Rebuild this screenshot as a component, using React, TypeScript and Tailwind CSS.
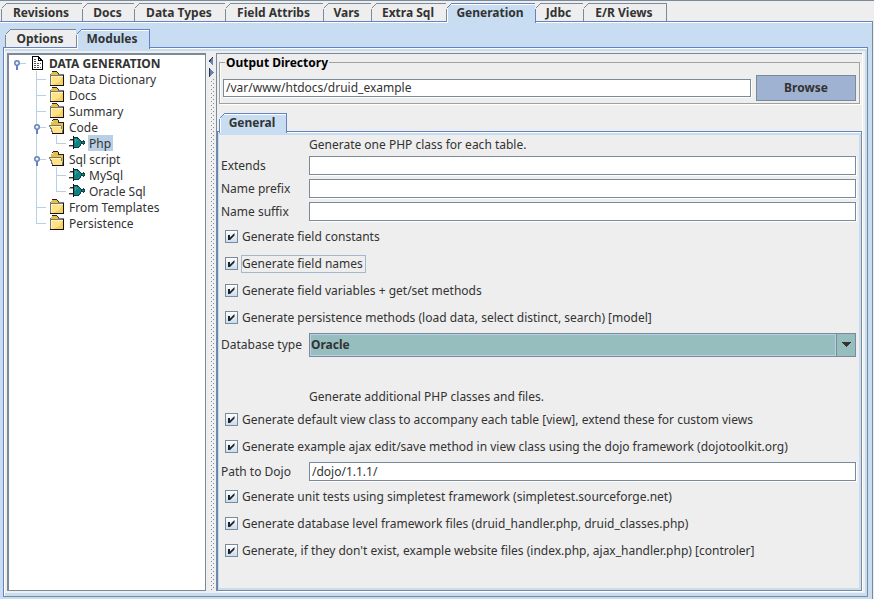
import React from "react";
import clsx from "clsx";

type TabProps = { label: string; width: string; selected?: boolean; first?: boolean; ground?: string };

function Tab({ label, width, selected, first, ground = "#eeeeee" }: TabProps) {
  const edge = selected ? "#6382bf" : "#7a8a99";
  return (
    <button
      role="tab"
      aria-selected={!!selected}
      className={clsx(
        "relative flex shrink-0 justify-center border-t border-r pr-0.5 text-center leading-[18px] font-bold",
        width,
        selected
          ? "-mb-0.5 h-5 border-[#6382bf] bg-[#c8ddf2] shadow-[inset_0_1px_0_#ffffff,inset_1px_0_0_#ffffff]"
          : "h-[18px] border-[#7a8a99] bg-[#eeeeee]",
        first && "border-l",
      )}
    >
      {label}
      <svg className="absolute -top-px -left-px" width="7" height="7" viewBox="0 0 7 7" shapeRendering="crispEdges" aria-hidden="true">
        <path d="M0 0H6L0 6Z" fill={ground} />
        <path d="M0.5 5.5L5.5 0.5" stroke={edge} />
      </svg>
    </button>
  );
}

type Guide = "handle" | "root" | "tee" | "elbow" | "pass" | "blank";

function GuideCell({ kind }: { kind: Guide }) {
  return (
    <svg className="shrink-0" width="20" height="16" viewBox="0 0 20 16" shapeRendering="crispEdges" aria-hidden="true">
      {(kind === "tee" || kind === "pass" || kind === "handle") && <path d="M7.5 0V16" stroke="#b8cfe5" />}
      {kind === "elbow" && <path d="M7.5 0V8" stroke="#b8cfe5" />}
      {(kind === "tee" || kind === "elbow") && <path d="M7 8.5H17" stroke="#b8cfe5" />}
      {(kind === "handle" || kind === "root") && (
        <g>
          <path d="M11 8.5H17" stroke="#b8cfe5" />
          <path d="M7 10h2v5h-2z" fill="#6382bf" />
          <circle cx="8" cy="8" r="2.25" fill="#e8f0fa" stroke="#6382bf" strokeWidth="1.5" shapeRendering="auto" />
        </g>
      )}
    </svg>
  );
}

function PageIcon() {
  return (
    <svg width="20" height="16" viewBox="0 0 20 16" shapeRendering="crispEdges" aria-hidden="true">
      <path d="M3.5 1.5H9.5L13.5 5.5V14.5H3.5Z" fill="#fff" stroke="#000" />
      <path d="M9.5 1.5V5.5H13.5M10 3h1v1M11 4h1v1" fill="none" stroke="#000" />
      <path d="M5 4.5h3M5 6.5h3M5 8.5h7M5 10.5h6M5 12.5h7" stroke="#555" strokeDasharray="2 1" />
    </svg>
  );
}

function FolderIcon() {
  return (
    <svg width="20" height="16" viewBox="0 0 20 16" shapeRendering="crispEdges" aria-hidden="true">
      <path d="M2 2h1V1h5v1h1v2H2z" fill="#e6bf45" />
      <path d="M3 1V0h5v1h1v1h1v2H9V2H8V1z" fill="#222" />
      <path d="M1 3h14v12H1z" fill="#777" />
      <path d="M2 3h7v1H2z" fill="#e6bf45" />
      <path d="M2 5h12v9H2z" fill="#ffe384" />
      <path d="M2 5h12v1H3v8H2z" fill="#fff3c4" />
      <path d="M14 6v8H5v-1h2v-1h2v-1h2v-2h1V7h1V6z" fill="#f8d060" />
      <path d="M14 4h1v11H1v-1h13z" fill="#111" />
    </svg>
  );
}

function OpenFolderIcon() {
  return (
    <svg width="20" height="16" viewBox="0 0 20 16" shapeRendering="crispEdges" aria-hidden="true">
      <path d="M2 3h2V1h5v2h6v12H3V9H2z" fill="#e6bf45" />
      <path d="M4 1V0h5v1h1v2H9V1zM3 2h1V1H3z" fill="#222" />
      <path d="M9 3h6v1H9z" fill="#222" />
      <path d="M0 6h12v1h1v4h1v4H3v-2H2v-3H1V8H0z" fill="#777" />
      <path d="M1 7h11v3h1v4H4v-2H3v-3H2V8H1z" fill="#ffe384" />
      <path d="M1 7h11v1H2z" fill="#fff3c4" />
      <path d="M14 4h1v11H3v-1h11z" fill="#111" />
    </svg>
  );
}

function GateIcon() {
  return (
    <svg width="20" height="16" viewBox="0 0 20 16" shapeRendering="crispEdges" aria-hidden="true">
      <path d="M1 4h4v1H1zM0 10h5v1H0z" fill="#333" />
      <path d="M0 5h4v1H0zM0 11h4v1H0z" fill="#aaa" />
      <path d="M11 6h3V5h1v1h1v3h-1v1h-1V9h-3z" fill="#0b4a4e" />
      <path d="M11 7h4v1h-4z" fill="#128080" />
      <path d="M4 2h5v1h1v1h1v1h1v1h1v3h-1v2h-1v1h-1v1H4z" fill="#0b3c40" />
      <path d="M5 3h3v1h2v1h1v1h1v3h-1v2h-1v1H5z" fill="#128080" />
      <path d="M6 4h2v1h1v1H7v2H6z" fill="#2aa0a0" />
      <path d="M4 1h1v13H4z" fill="#111" />
    </svg>
  );
}

const icons = { page: PageIcon, folder: FolderIcon, open: OpenFolderIcon, gate: GateIcon };

const nodes: { label: string; guides: Guide[]; icon: keyof typeof icons; selected?: boolean }[] = [
  { label: "DATA GENERATION", guides: ["root"], icon: "page" },
  { label: "Data Dictionary", guides: ["blank", "tee"], icon: "folder" },
  { label: "Docs", guides: ["blank", "tee"], icon: "folder" },
  { label: "Summary", guides: ["blank", "tee"], icon: "folder" },
  { label: "Code", guides: ["blank", "handle"], icon: "open" },
  { label: "Php", guides: ["blank", "pass", "elbow"], icon: "gate", selected: true },
  { label: "Sql script", guides: ["blank", "handle"], icon: "open" },
  { label: "MySql", guides: ["blank", "pass", "tee"], icon: "gate" },
  { label: "Oracle Sql", guides: ["blank", "pass", "elbow"], icon: "gate" },
  { label: "From Templates", guides: ["blank", "tee"], icon: "folder" },
  { label: "Persistence", guides: ["blank", "elbow"], icon: "folder" },
];

function Tree() {
  return (
    <ul role="tree" className="w-[199px] shrink-0 border border-t-2 border-l-2 border-[#7a8a99] bg-white">
      {nodes.map((n) => {
        const Icon = icons[n.icon];
        return (
          <li key={n.label} role="treeitem" aria-selected={!!n.selected} className="flex h-4 items-center">
            {n.guides.map((g, i) => (
              <GuideCell key={i} kind={g} />
            ))}
            <Icon />
            <span
              className={clsx(
                "pt-0.5 leading-[14px] whitespace-nowrap",
                n.icon === "page" && "font-bold",
                n.selected && "-ml-px bg-[#b8cfe5] pr-0.5 pl-px",
              )}
            >
              {n.label}
            </span>
          </li>
        );
      })}
    </ul>
  );
}

function Divider() {
  return (
    <div className="w-2.5 shrink-0">
      <svg className="h-full w-full" shapeRendering="crispEdges" aria-hidden="true">
        <defs>
          <pattern id="bumps" width="4" height="4" patternUnits="userSpaceOnUse">
            <path d="M1 0h1v1h-1zM3 2h1v1h-1z" fill="#7a8a99" />
            <path d="M2 1h1v1h-1zM0 3h1v1h-1z" fill="#fff" />
          </pattern>
        </defs>
        <rect x="4" y="26" width="4" height="511" fill="url(#bumps)" />
        <path d="M7 4v9L2.500 8.500Z" fill="#6382bf" />
        <path d="M7 4L3 8.500" stroke="#333" />
        <path d="M3 15v9L7.500 19.500Z" fill="#6382bf" />
        <path d="M3.500 15v9" stroke="#333" />
      </svg>
    </div>
  );
}

const fieldBox =
  "border border-[#7a8a99] bg-white pl-0.5 shadow-[1px_1px_0_#ffffff] outline-none";

function TextRow({ id, label, value = "" }: { id: string; label: string; value?: string }) {
  return (
    <div className="flex h-[23px] items-center">
      <label htmlFor={id} className="w-[88px] shrink-0 whitespace-nowrap">
        {label}
      </label>
      <input id={id} type="text" defaultValue={value} className={clsx(fieldBox, "h-[19px] min-w-0 flex-1")} />
    </div>
  );
}

function CheckRow({ label, focused }: { label: string; focused?: boolean }) {
  return (
    <div className="flex h-[27px] items-center pl-1">
      <label className="flex items-center gap-1">
        <span className="relative size-[13px] shrink-0">
          <input
            type="checkbox"
            defaultChecked
            className="peer block size-[13px] appearance-none border border-[#7a8a99] bg-linear-to-b from-white to-[#c8ddf2]"
          />
          <svg className="pointer-events-none absolute top-0 left-0 hidden peer-checked:block" width="13" height="13" viewBox="0 0 13 13" aria-hidden="true">
            <path d="M3 5H5V7.500L9.500 3V5.500L5 10H3Z" fill="#222" />
          </svg>
        </span>
        <span className={clsx("leading-4 whitespace-nowrap", focused && "pr-0.5 shadow-[0_0_0_1px_#a3b8cc]")}>{label}</span>
      </label>
    </div>
  );
}

function Note({ children }: { children: React.ReactNode }) {
  return <p className="h-[19px] pl-[88px] leading-[19px]">{children}</p>;
}

function GeneralForm() {
  return (
    <form className="flex-1 border border-[#7a8a99] border-t-[#6382bf] border-l-[#6382bf] bg-[#eeeeee] shadow-[inset_0_1px_0_#ffffff,1px_1px_0_#ffffff]">
      <div className="mt-px h-[calc(100%-1px)] border-2 border-l border-[#c8ddf2] pr-[3px] pl-0.5">
        <Note>Generate one PHP class for each table.</Note>
        <TextRow id="extends" label="Extends" />
        <TextRow id="prefix" label="Name prefix" />
        <TextRow id="suffix" label="Name suffix" />
        <CheckRow label="Generate field constants" />
        <CheckRow label="Generate field names" focused />
        <CheckRow label="Generate field variables + get/set methods" />
        <CheckRow label="Generate persistence methods (load data, select distinct, search) [model]" />
        <div className="flex h-[27px] items-center">
          <label htmlFor="database" className="w-[88px] shrink-0 whitespace-nowrap">
            Database type
          </label>
          <div className="relative min-w-0 flex-1">
            <select
              id="database"
              className="block h-6 w-full appearance-none border border-[#7a8a99] bg-[#96bebe] pl-px font-bold outline-none"
            >
              <option>Oracle</option>
            </select>
            <span className="pointer-events-none absolute inset-y-px right-px flex w-[19px] items-center justify-center border-l border-[#7a8a99]">
              <svg width="10" height="5" viewBox="0 0 10 5" shapeRendering="crispEdges" aria-hidden="true">
                <path d="M0 0H10L5 5Z" fill="#333" />
              </svg>
            </span>
            <span className="pointer-events-none absolute inset-y-px right-5 left-px border border-[#b8cfe5]" />
          </div>
        </div>
        <div className="h-[29px]" />
        <Note>Generate additional PHP classes and files.</Note>
        <CheckRow label="Generate default view class to accompany each table [view], extend these for custom views" />
        <CheckRow label="Generate example ajax edit/save method in view class using the dojo framework (dojotoolkit.org)" />
        <TextRow id="dojo" label="Path to Dojo" value="/dojo/1.1.1/" />
        <CheckRow label="Generate unit tests using simpletest framework (simpletest.sourceforge.net)" />
        <CheckRow label="Generate database level framework files (druid_handler.php, druid_classes.php)" />
        <CheckRow label="Generate, if they don't exist, example website files (index.php, ajax_handler.php) [controler]" />
      </div>
    </form>
  );
}

function OutputDirectory() {
  return (
    <fieldset className="mx-0.5 h-[50px] border border-[#a0a0a0] px-[3px] shadow-[inset_1px_0_0_#ffffff,1px_1px_0_#ffffff]">
      <legend className="ml-0.5 px-px pt-0.5 leading-[14px] font-bold text-black">Output Directory</legend>
      <div className="flex h-9 items-center gap-[5px]">
        <input
          type="text"
          aria-label="Output Directory"
          defaultValue="/var/www/htdocs/druid_example"
          className={clsx(fieldBox, "h-[18px] min-w-0 flex-1")}
        />
        <button className="h-[26px] w-[100px] border border-[#7a8a99] bg-[#a0b2d1] font-bold">Browse</button>
      </div>
    </fieldset>
  );
}

export default function App() {
  return (
    <div className="flex min-h-screen flex-col border-t border-[#7a8a99] bg-[#eeeeee] font-['Noto_Sans',sans-serif] text-[12px] text-[#333333]">
      <div role="tablist" className="flex h-5 items-end pl-px">
        <Tab label="Revisions" width="w-[82px]" first />
        <Tab label="Docs" width="w-[52px]" />
        <Tab label="Data Types" width="w-[91px]" />
        <Tab label="Field Attribs" width="w-[98px]" />
        <Tab label="Vars" width="w-[48px]" />
        <Tab label="Extra Sql" width="w-[75px]" />
        <Tab label="Generation" width="w-[89px]" selected />
        <Tab label="Jdbc" width="w-[48px]" />
        <Tab label="E/R Views" width="w-[83px]" />
      </div>
      <main className="mr-px flex flex-1 flex-col border-t border-r border-t-[#6382bf] border-r-[#7a8a99] bg-[#c8ddf2] pr-1 pb-0.5 pl-[3px] shadow-[inset_0_1px_0_#ffffff]">
        <div role="tablist" className="flex h-[25px] items-end pl-0.5">
          <Tab label="Options" width="w-[72px]" first ground="#c8ddf2" />
          <Tab label="Modules" width="w-[73px]" selected ground="#c8ddf2" />
        </div>
        <div className="flex flex-1 flex-col border border-[#7a8a99] border-t-[#6382bf] border-l-[#6382bf] bg-[#c8ddf2] pt-[3px] pr-0.5 pb-[3px] pl-px shadow-[inset_1px_1px_0_#ffffff]">
          <div className="flex flex-1 bg-[#eeeeee] pt-0.5 pr-[3px] pb-0.5 pl-0.5">
            <Tree />
            <Divider />
            <section className="flex min-w-0 flex-1 flex-col border-t border-l border-[#7a8a99] shadow-[1px_0_0_#ffffff]">
              <OutputDirectory />
              <div role="tablist" className="flex h-[27px] items-end pl-0.5">
                <Tab label="General" width="w-[68px]" selected first />
              </div>
              <GeneralForm />
            </section>
          </div>
        </div>
      </main>
    </div>
  );
}
